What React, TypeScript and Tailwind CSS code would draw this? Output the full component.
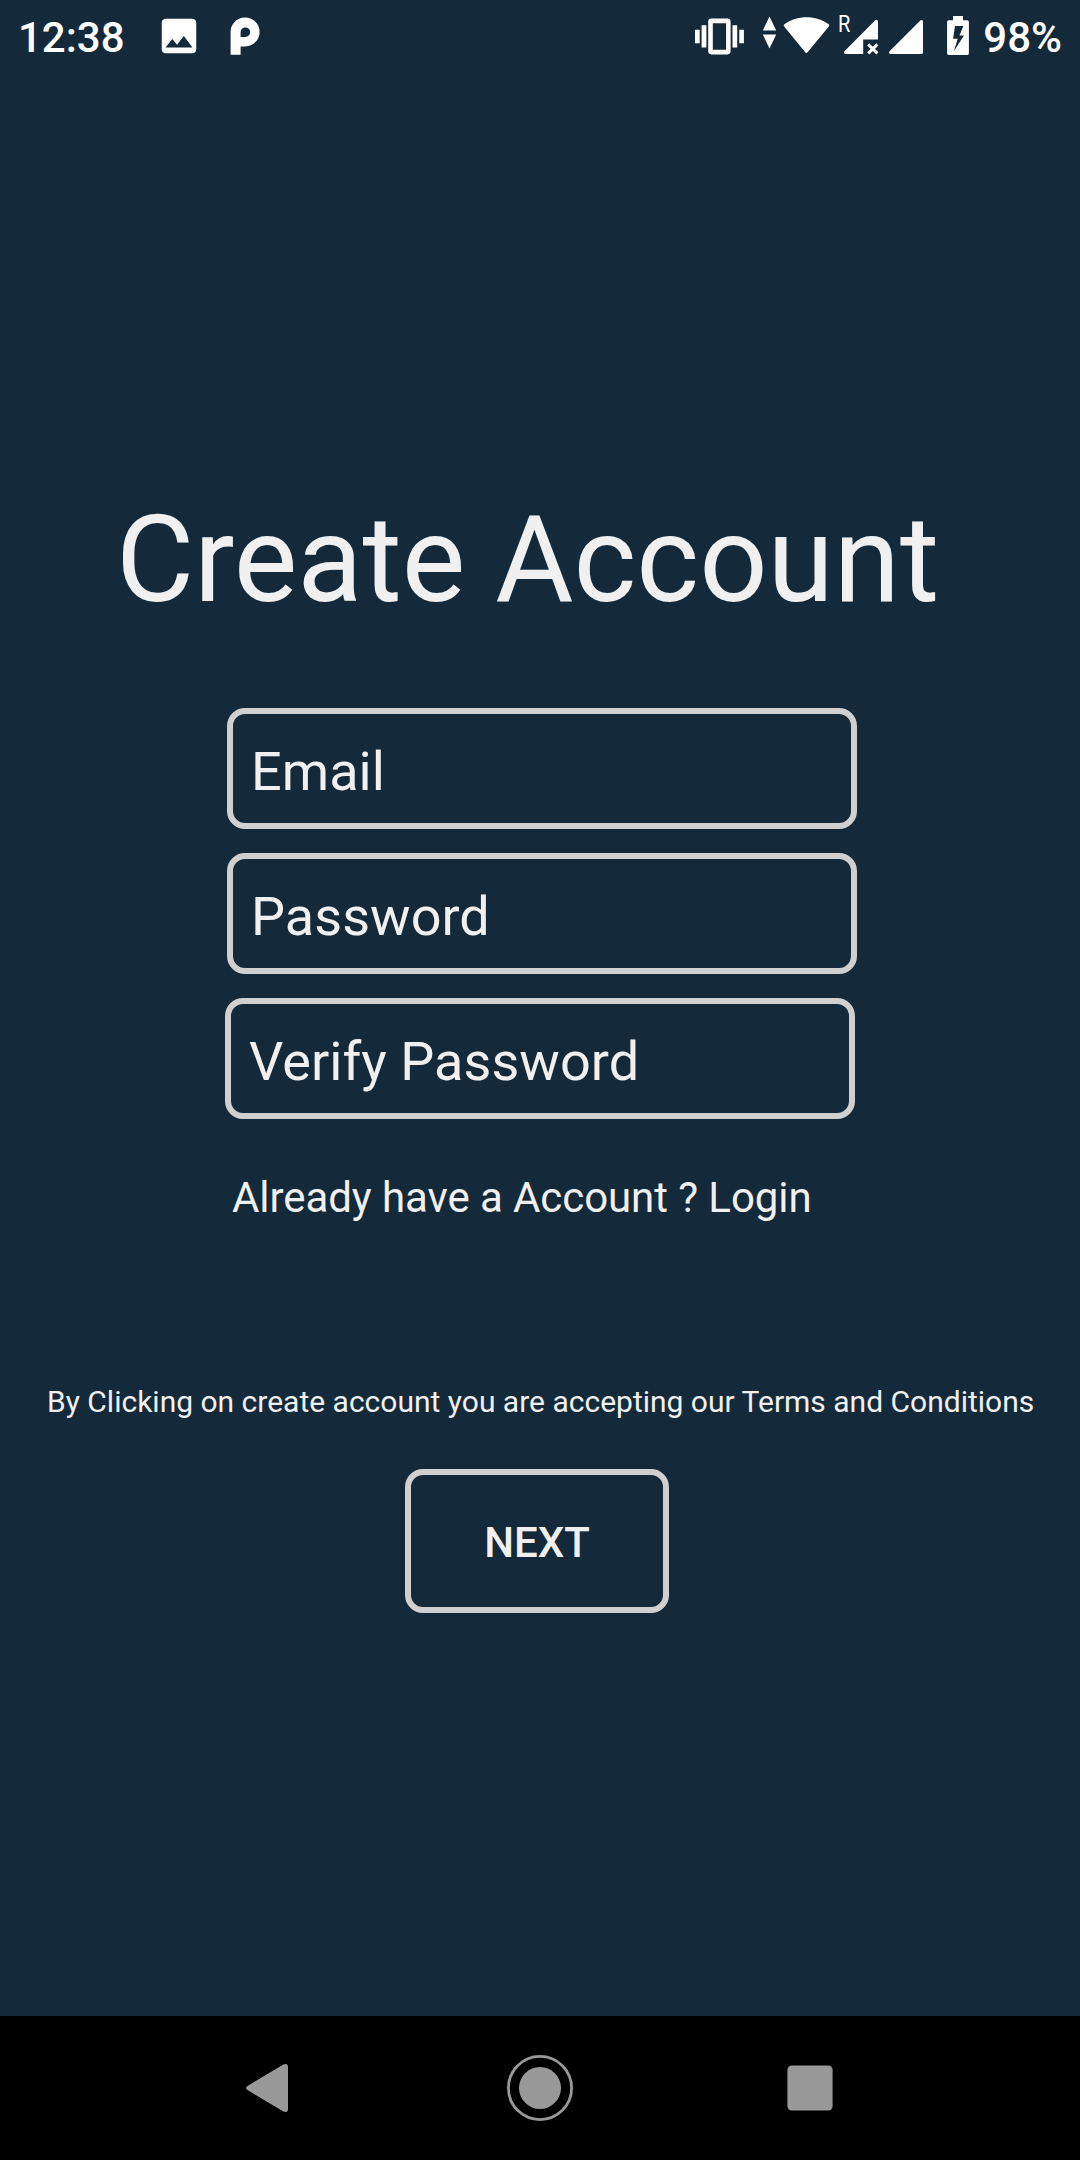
const roboto = { fontFamily: 'Roboto, "Noto Sans", sans-serif' };

function StatusBar() {
  return (
    <header className="flex h-[72px] w-full shrink-0 items-start text-white">
      <span className="mt-[13px] ml-[18px] w-[138px] text-[42px] leading-[50px] font-medium whitespace-nowrap">12:38</span>
      <svg className="mt-[13px] h-[46px] w-[46px] shrink-0" viewBox="0 0 24 24" fill="currentColor">
        <path d="M21 19V5c0-1.1-.9-2-2-2H5c-1.1 0-2 .9-2 2v14c0 1.1.9 2 2 2h14c1.1 0 2-.9 2-2zM8.5 13.5l2.5 3.01L14.5 12l4.5 6H5l3.5-4.5z" />
      </svg>
      <svg className="ml-6 h-[72px] w-9 shrink-0" viewBox="226 0 36 72" fill="currentColor" fillRule="evenodd">
        <path d="M230.6 54.8V32.4a14.5 14.5 0 1 1 14.5 14H240.6V54.8ZM240.6 37V32.2a4.8 4.8 0 1 1 4.8 4.8Z" />
      </svg>
      <div className="ml-auto flex items-start">
        <svg className="h-[72px] w-[56px] shrink-0" viewBox="692 0 56 72" fill="currentColor">
          <path d="M695 29.7h4.7v13.6H695zM701.6 25.2h4.8v22.3h-4.8zM732.5 25.2h4.7v22.3h-4.7zM739.3 29.7h4.6v13.6h-4.6z" />
          <path fillRule="evenodd" d="M711.5 18.6h15.8a3.3 3.3 0 0 1 3.3 3.3v29.2a3.3 3.3 0 0 1-3.3 3.3h-15.8a3.3 3.3 0 0 1-3.3-3.3V21.9a3.3 3.3 0 0 1 3.3-3.3ZM712.8 23.2v26.6h13.3V23.2Z" />
        </svg>
        <svg className="h-[72px] w-[90px] shrink-0" viewBox="748 0 90 72" fill="currentColor">
          <path d="M769.5 16.6l6.7 13.9h-13.4zM769.5 48.6l6.7-14h-13.4z" />
          <path d="M784.3 24.2C797 14.8 816 14.8 828.8 24.2Q829.8 25 829 26.2L807.6 52.2Q806.4 53.6 805.2 52.2L784 26.2Q783.2 25 784.3 24.2Z" />
        </svg>
        <div className="relative h-[72px] w-[44px] shrink-0">
          <span className="absolute top-[11px] left-0 origin-left scale-x-[0.87] text-[23px] leading-[27px]">R</span>
          <svg className="h-[72px] w-[44px]" viewBox="838 0 44 72" fill="currentColor">
            <path d="M845 53.9q-1.8-.6-.8-2.4L875 20.4q2.4-1.4 3 .8V39.4H863.2V53.9Z" />
            <path d="M868.2 44.4l9.2 9M877.4 44.4l-9.2 9" stroke="currentColor" strokeWidth="3" fill="none" />
          </svg>
        </div>
        <svg className="h-[72px] w-[98px] shrink-0" viewBox="882 0 98 72" fill="currentColor">
          <path d="M889.8 53.9q-1.5-.9-.5-2.4L920.3 20.4q2.2-1.2 2.7.8V52.6q0 1.3-1.3 1.3Z" />
          <path fillRule="evenodd" d="M953 16h10v4.3h4.3q1.6 0 1.6 1.6V53.3q0 1.6-1.6 1.6H948.7q-1.6 0-1.6-1.6V21.9q0-1.6 1.6-1.6H953ZM955 26 953.1 38.8H957.7L953.8 51.2 964 35.4H959.4L963.4 26Z" />
        </svg>
        <span className="mt-[13px] mr-[18px] ml-[3px] text-[42px] leading-[50px] font-medium whitespace-nowrap">98%</span>
      </div>
    </header>
  );
}

function Field({ label, last = false }: { label: string; last?: boolean }) {
  return (
    <div
      className={`flex h-[121px] w-[630px] items-center rounded-[18px] border-6 border-[#d0d0d0] px-[18px] pt-[7px] text-[54px] leading-[64px] tracking-[0.04px] ${last ? 'ml-[225px]' : 'ml-[227px]'}`}
    >
      {label}
    </div>
  );
}

function NavigationBar() {
  return (
    <nav className="flex h-36 w-full shrink-0 items-center justify-center gap-[198px] bg-black text-[#999999]">
      <svg className="h-[72px] w-[72px]" viewBox="234 2052 72 72" fill="currentColor">
        <path d="M247.5 2085.9 283.4 2064.4Q288 2062.8 288 2067V2109Q288 2113.2 283.4 2111.5L247.5 2090.1Q244.6 2088 247.5 2085.9Z" />
      </svg>
      <svg className="h-[72px] w-[72px]" viewBox="0 0 72 72">
        <circle cx="36" cy="36" r="31.6" fill="none" stroke="currentColor" strokeWidth="2.8" />
        <circle cx="36" cy="36" r="21" fill="currentColor" />
      </svg>
      <svg className="h-[72px] w-[72px]" viewBox="0 0 72 72" fill="currentColor">
        <rect x="13.4" y="13.4" width="45.2" height="45.2" rx="4.5" />
      </svg>
    </nav>
  );
}

export default function App() {
  return (
    <div className="flex h-[2160px] w-[1080px] flex-col overflow-hidden bg-[#142a3b] text-[#f0f0f0]" style={roboto}>
      <StatusBar />
      <main className="flex flex-1 flex-col items-start">
        <h1 className="mt-[418px] ml-[116px] text-[120px] leading-[140px] font-normal whitespace-nowrap">Create Account</h1>
        <div className="mt-[78px] flex flex-col gap-6">
          <Field label="Email" />
          <Field label="Password" />
          <Field label="Verify Password" last />
        </div>
        <p className="mt-[54px] ml-[232px] text-[42px] leading-[50px] tracking-[-0.08px] whitespace-nowrap">Already have a Account ? Login</p>
        <p className="mt-[161px] ml-[47px] text-[30px] leading-[36px] whitespace-nowrap">
          By Clicking on create account you are accepting our Terms and Conditions
        </p>
        <button className="mt-[49px] ml-[405px] flex h-36 w-[264px] items-center justify-center rounded-[18px] border-6 border-[#d0d0d0] pt-[3px] text-[42px] leading-[50px] font-medium">
          NEXT
        </button>
      </main>
      <NavigationBar />
    </div>
  );
}
